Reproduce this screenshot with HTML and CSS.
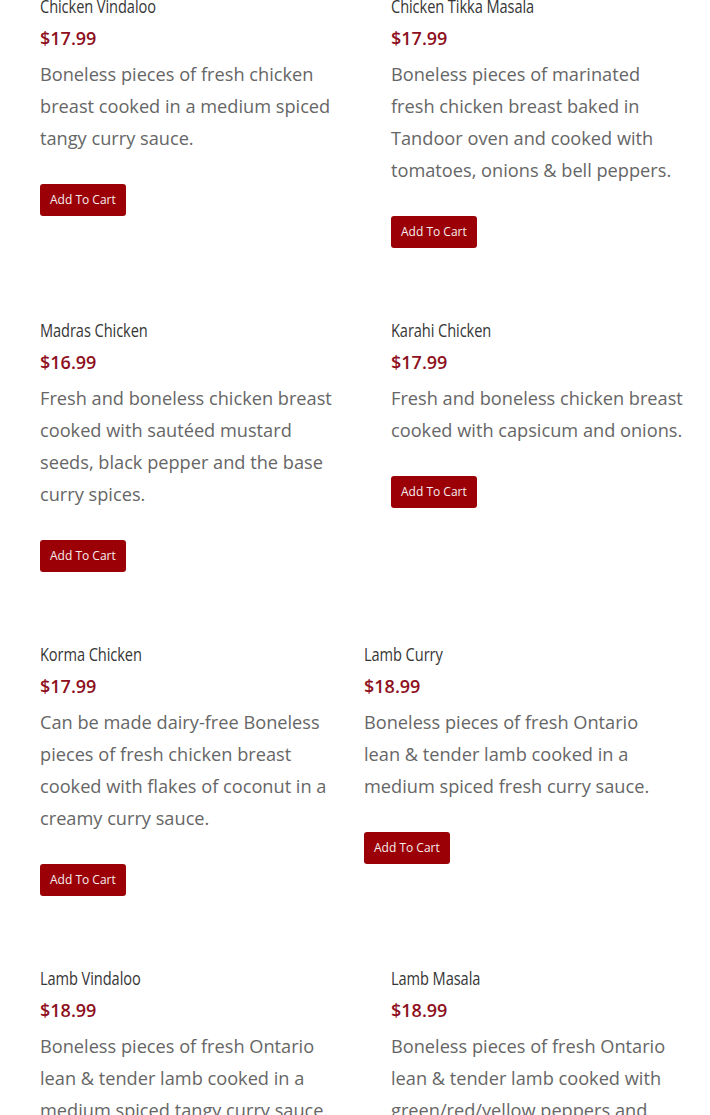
FILE: index.html
```html
<!DOCTYPE html>
<html lang="en">
<head>
<meta charset="utf-8">
<title>Menu</title>
<link rel="stylesheet" href="styles.css">
</head>
<body>
<main class="menu">
  <section class="row">
    <article class="item">
      <h3 class="item-title">Chicken Vindaloo</h3>
      <p class="item-price">$17.99</p>
      <p class="item-desc">Boneless pieces of fresh chicken breast cooked in a medium spiced tangy curry sauce.</p>
      <button class="cart-btn">Add To Cart</button>
    </article>
    <article class="item">
      <h3 class="item-title">Chicken Tikka Masala</h3>
      <p class="item-price">$17.99</p>
      <p class="item-desc">Boneless pieces of marinated fresh chicken breast baked in Tandoor oven and cooked with tomatoes, onions &amp; bell peppers.</p>
      <button class="cart-btn">Add To Cart</button>
    </article>
  </section>
  <section class="row">
    <article class="item">
      <h3 class="item-title">Madras Chicken</h3>
      <p class="item-price">$16.99</p>
      <p class="item-desc">Fresh and boneless chicken breast cooked with sautéed mustard seeds, black pepper and the base curry spices.</p>
      <button class="cart-btn">Add To Cart</button>
    </article>
    <article class="item">
      <h3 class="item-title">Karahi Chicken</h3>
      <p class="item-price">$17.99</p>
      <p class="item-desc">Fresh and boneless chicken breast cooked with capsicum and onions.</p>
      <button class="cart-btn">Add To Cart</button>
    </article>
  </section>
  <section class="row row-narrow">
    <article class="item">
      <h3 class="item-title">Korma Chicken</h3>
      <p class="item-price">$17.99</p>
      <p class="item-desc">Can be made dairy-free Boneless pieces of fresh chicken breast cooked with flakes of coconut in a creamy curry sauce.</p>
      <button class="cart-btn">Add To Cart</button>
    </article>
    <article class="item">
      <h3 class="item-title">Lamb Curry</h3>
      <p class="item-price">$18.99</p>
      <p class="item-desc">Boneless pieces of fresh Ontario lean &amp; tender lamb cooked in a medium spiced fresh curry sauce.</p>
      <button class="cart-btn">Add To Cart</button>
    </article>
  </section>
  <section class="row">
    <article class="item">
      <h3 class="item-title">Lamb Vindaloo</h3>
      <p class="item-price">$18.99</p>
      <p class="item-desc">Boneless pieces of fresh Ontario lean &amp; tender lamb cooked in a medium spiced tangy curry sauce.</p>
      <button class="cart-btn">Add To Cart</button>
    </article>
    <article class="item">
      <h3 class="item-title">Lamb Masala</h3>
      <p class="item-price">$18.99</p>
      <p class="item-desc">Boneless pieces of fresh Ontario lean &amp; tender lamb cooked with green/red/yellow peppers and onions in a spiced curry sauce.</p>
      <button class="cart-btn">Add To Cart</button>
    </article>
  </section>
</main>
</body>
</html>
```
FILE: styles.css
```css
html, body {
  margin: 0;
  padding: 0;
  background: #ffffff;
}

body {
  font-family: "Open Sans", "Liberation Sans", sans-serif;
  overflow: hidden;
}

.menu {
  padding: 0 40px;
  margin-top: -6px;
}

.row {
  display: grid;
  grid-template-columns: 295px 295px;
  column-gap: 56px;
  align-items: start;
  margin-bottom: 70px;
}

.row-narrow {
  column-gap: 29px;
}

.item {
  display: flex;
  flex-direction: column;
  align-items: flex-start;
}

.item-title {
  margin: 0 0 8px;
  font-family: "Open Sans", "Liberation Sans", sans-serif;
  font-weight: 500;
  font-size: 18.5px;
  line-height: 24px;
  color: #363636;
  letter-spacing: -0.1px;
  white-space: nowrap;
  transform: scaleX(0.79);
  transform-origin: left center;
}

.item-price {
  margin: 0 0 8px;
  font-weight: 600;
  font-size: 18px;
  line-height: 24px;
  color: #8e1020;
}

.item-desc {
  margin: 0 0 30px;
  font-size: 18.2px;
  line-height: 32px;
  color: #666666;
}

.cart-btn {
  height: 32px;
  padding: 0 10px;
  border: none;
  border-radius: 3px;
  background: #9b0006;
  color: #f6eeee;
  font-family: "Open Sans", "Liberation Sans", sans-serif;
  font-size: 12px;
  line-height: 32px;
  cursor: pointer;
}
```
